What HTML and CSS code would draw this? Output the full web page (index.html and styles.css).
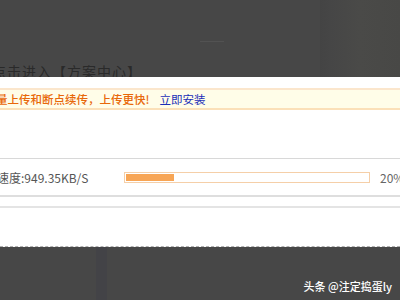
FILE: index.html
```html
<!DOCTYPE html>
<html>
<head>
<meta charset="utf-8">
<link rel="stylesheet" href="styles.css">
</head>
<body>
<div class="top">
  <div class="top-line"></div>
  <div class="top-text">点击进入【方案中心】</div>
  <div class="top-right"></div>
</div>
<div class="dialog">
  <div class="tip">
    <span class="tip-text">量上传和断点续传，上传更快!</span>
    <span class="tip-link">立即安装</span>
  </div>
  <div class="row">
    <span class="speed">速度:949.35KB/S</span>
    <div class="bar"><div class="fill" style="width:20%"></div></div>
    <span class="pct">20%</span>
  </div>
  <div class="row2"></div>
  <div class="space"></div>
</div>
<div class="bottom">
  <div class="band"></div>
  <div class="mark">头条 @注定捣蛋ly</div>
</div>
</body>
</html>
```
FILE: styles.css
```css
html, body {
  margin: 0;
  padding: 0;
  width: 400px;
  height: 300px;
  overflow: hidden;
  background: #474747;
  font-family: "Noto Sans CJK SC", sans-serif;
}
.top {
  height: 77px;
  background: #474747;
  position: relative;
  overflow: hidden;
}
.top-line {
  position: absolute;
  left: 200px;
  top: 41px;
  width: 24px;
  height: 1px;
  background: #525252;
}
.top-right {
  position: absolute;
  left: 320px;
  top: 0;
  width: 80px;
  height: 77px;
  background: linear-gradient(90deg, #444 0, #464646 10px, #4a4a48 40px, #484846 80px);
}
.top-text {
  position: absolute;
  left: -8px;
  top: 61px;
  font-size: 14px;
  line-height: 20px;
  color: #2a2a2a;
  letter-spacing: 1px;
}
.dialog {
  height: 170px;
  background: #fff;
  box-sizing: border-box;
  padding-top: 11px;
  border-bottom: 1px dashed #b0b0b0;
  position: relative;
}
.tip {
  height: 22px;
  box-sizing: border-box;
  background: #fffde8;
  border-top: 2px solid #fbe6cc;
  border-bottom: 2px solid #fbe0b8;
  display: flex;
  align-items: center;
  font-size: 11.5px;
  line-height: 16px;
  margin-left: -4px;
  white-space: nowrap;
}
.tip-text {
  color: #e8680a;
  font-weight: 500;
}
.tip-link {
  color: #1a2fb8;
  margin-left: 10px;
}
.row {
  margin-top: 48px;
  height: 36px;
  border-top: 1px solid #d8d8d8;
  border-bottom: 2px solid #dedede;
  display: flex;
  align-items: center;
  white-space: nowrap;
}
.speed {
  color: #555;
  font-size: 12px;
  margin-left: -3px;
  width: 127px;
  flex: none;
}
.bar {
  width: 246px;
  height: 11px;
  box-sizing: border-box;
  border: 1px solid #f5cfa8;
  padding: 1px;
  flex: none;
  display: flex;
}
.fill {
  background: #f7a555;
  height: 100%;
}
.pct {
  margin-left: 10px;
  color: #666;
  font-size: 12px;
}
.row2 {
  height: 9px;
  border-bottom: 2px solid #e4e4e4;
}
.bottom {
  height: 53px;
  position: relative;
  background: #474747;
}
.band {
  position: absolute;
  left: 96px;
  top: 0;
  width: 11px;
  height: 53px;
  background: #434347;
}
.mark {
  position: absolute;
  right: 8px;
  top: 31px;
  color: #fff;
  font-size: 11px;
  font-weight: 500;
  line-height: 16px;
}
```
